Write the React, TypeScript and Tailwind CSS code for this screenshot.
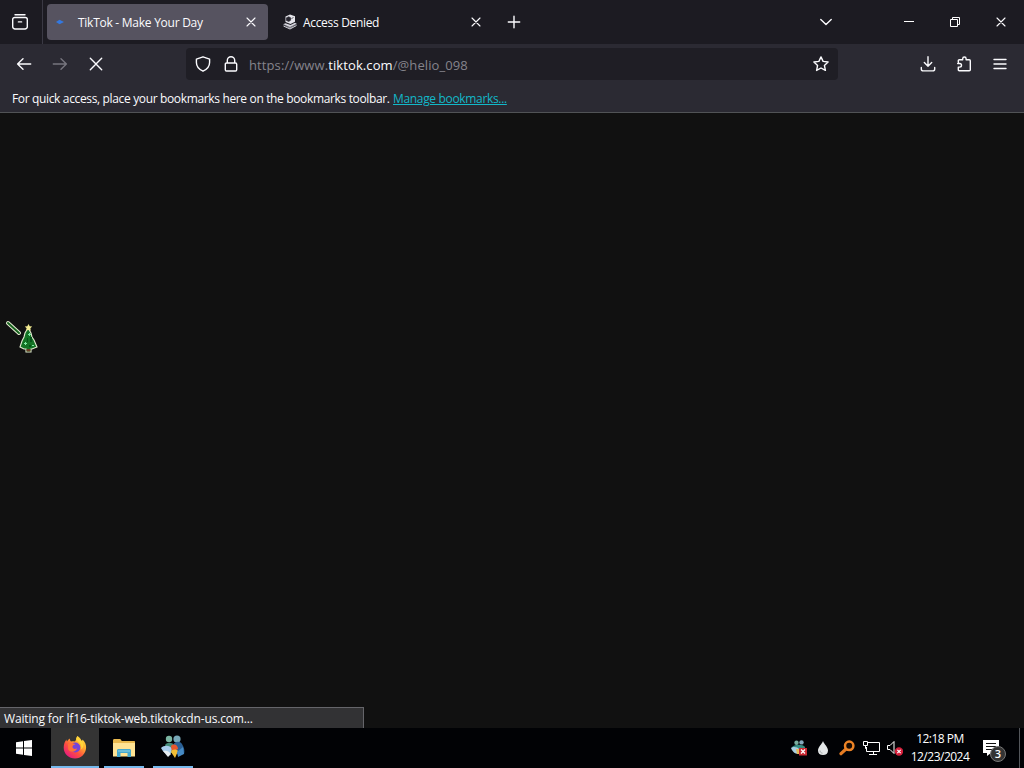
import type { ReactNode } from "react"

const stroke = {
  fill: "none",
  stroke: "currentColor",
  strokeWidth: 1.4,
  strokeLinecap: "round",
  strokeLinejoin: "round",
} as const

function Close({ className = "" }: { className?: string }) {
  return (
    <svg className={`h-2.5 w-2.5 shrink-0 ${className}`} viewBox="0 0 10 10">
      <path d="M1 1l8 8M9 1L1 9" {...stroke} strokeWidth={1.1} />
    </svg>
  )
}

function Icon({ children, className = "" }: { children: ReactNode; className?: string }) {
  return (
    <svg className={`h-4 w-4 shrink-0 ${className}`} viewBox="0 0 16 16" {...stroke}>
      {children}
    </svg>
  )
}

function TabBar() {
  return (
    <div className="flex h-11 items-center bg-[#1c1b22]">
      <div className="flex h-full w-[43px] shrink-0 items-center border-r border-[#3a3944] pl-3">
        <Icon>
          <path d="M3 .8h10" />
          <path d="M2.7 3.5h10.6a2 2 0 0 1 2 2v7.2a2.3 2.3 0 0 1-2.3 2.3H3a2.3 2.3 0 0 1-2.3-2.3V5.5a2 2 0 0 1 2-2zM6.4 7.9h3.2" />
        </Icon>
      </div>
      <div className="ml-1 flex h-9 w-[221px] shrink-0 items-center rounded bg-[#565360] pl-[9px]">
        <svg className="h-2 w-2" viewBox="0 0 8 8">
          <path d="M0 4l3.5-2.2L8 4 3.5 6.2z" fill="#3478df" />
        </svg>
        <span className="ml-3.5 w-[168px] whitespace-nowrap pt-0.5 text-xs tracking-[-0.26px]">
          TikTok - Make Your Day
        </span>
        <Close />
      </div>
      <div className="flex w-[220px] shrink-0 items-center pl-3.5">
        <svg className="h-4 w-4 shrink-0" viewBox="0 0 16 16">
          <path d="M3.5 2.5L8 .5l5 1.8v5.4L8.5 10 3.5 8z" fill="#e6e6ec" />
          <path d="M4.5 3.8l2.3-1 1.8 1v2.4L6.8 7.4 4.5 6.5zM9.5 4.5l2-1" fill="#282730" stroke="#282730" strokeWidth=".7" />
          <path d="M1 10.2l2.5-1 5 1.8 4.5-2.2 2 1.2-7 4.6z" fill="#d5d5dd" />
          <path d="M1 10.5l7 3 7-3.5" stroke="#4a4952" strokeWidth=".8" fill="none" />
          <path d="M1.5 12l6.5 3 6.5-3.5" stroke="#d5d5dd" fill="none" />
        </svg>
        <span className="ml-[5px] w-[168px] whitespace-nowrap pt-0.5 text-xs tracking-[-0.32px]">
          Access Denied
        </span>
        <Close />
      </div>
      <svg className="ml-[19px] h-3.5 w-3.5" viewBox="0 0 14 14">
        <path d="M7 1.3v11.4M1.3 7h11.4" {...stroke} />
      </svg>
      <div className="ml-auto flex items-center">
        <svg className="h-3 w-3" viewBox="0 0 12 12">
          <path d="M.8 3.5L6 8.5l5.2-5" {...stroke} />
        </svg>
        <svg className="ml-[72px] h-2.5 w-2.5" viewBox="0 0 10 10">
          <path d="M0 4.5h10" stroke="#fff" />
        </svg>
        <svg className="ml-9 h-2.5 w-2.5" viewBox="0 0 10 10">
          <path d="M.5 2.5h7v7h-7zM2.5 2.5v-2h7v7h-2" fill="none" stroke="#fff" />
        </svg>
        <Close className="ml-9 mr-[18px]" />
      </div>
    </div>
  )
}

function NavBar() {
  return (
    <div className="flex h-10 items-center bg-[#2b2a33]">
      <Icon className="ml-4">
        <path d="M14.7 8H1.6M7 2.8L1.6 8 7 13.2" />
      </Icon>
      <Icon className="ml-5 text-[#77767f]">
        <path d="M1.3 8h13.1M9 2.8L14.4 8 9 13.2" />
      </Icon>
      <Icon className="ml-5">
        <path d="M2.3 2.3l11.4 11.4M13.7 2.3L2.3 13.7" />
      </Icon>
      <div className="ml-[82px] flex h-8 w-[652px] shrink-0 items-center rounded-sm bg-[#1f1e25] pl-[9px]">
        <Icon>
          <path d="M8 .8l6.6 2.3v3.5c0 4.2-2.9 7-6.6 8.6-3.7-1.6-6.6-4.4-6.6-8.6V3.1z" />
        </Icon>
        <Icon className="ml-3">
          <path d="M3.5 7h9a1.2 1.2 0 0 1 1.2 1.2v5.6a1.2 1.2 0 0 1-1.2 1.2h-9a1.2 1.2 0 0 1-1.2-1.2V8.2A1.2 1.2 0 0 1 3.5 7zM4.3 7V4.4a3.7 3.7 0 0 1 7.4 0V7" />
        </Icon>
        <span className="ml-2.5 w-[564px] whitespace-nowrap pt-[3px] text-[13px] tracking-[0.1px] text-[#85848c]">
          https://www.<span className="text-[#fbfbfe]">tiktok.com</span>/@helio_098
        </span>
        <Icon>
          <path d="M8 .9l2.1 4.5 5 .6-3.7 3.4 1 5L8 12l-4.4 2.4 1-5L.9 6l5-.6z" />
        </Icon>
      </div>
      <div className="ml-auto mr-4 flex items-center gap-5">
        <Icon>
          <path d="M8 .8v9.4M4.3 6.6L8 10.3l3.7-3.7M1.3 11.5v1.4c0 1.2.8 2 2 2h9.4c1.2 0 2-.8 2-2v-1.4" />
        </Icon>
        <Icon>
          <path d="M2.3 6.6V4.8c0-.6.4-1 1-1h3.4V2.7a1.7 1.7 0 0 1 3.4 0v1.1h3.2c.6 0 1 .4 1 1v9c0 .6-.4 1-1 1h-10c-.6 0-1-.4-1-1v-2.7h1.4a1.8 1.8 0 0 0 0-3.6H1.7" />
        </Icon>
        <Icon>
          <path d="M2 3.5h12M2 8h12M2 12.5h12" />
        </Icon>
      </div>
    </div>
  )
}

function ButterflyIcon({ className }: { className: string }) {
  return (
    <svg className={className} viewBox="0 0 24 24">
      <circle cx="8" cy="4" r="3.2" fill="#7bb5a2" />
      <circle cx="16" cy="4" r="3.6" fill="#78a8b8" />
      <path d="M4 10c2-3 7-3 9 0v8H7z" fill="#438b78" />
      <path d="M12 10c2-4 7-4 9-1 2 3 3 7 2 10h-9z" fill="#2a5f94" />
      <path d="M0 13c3-3 9-3 11 1l-2 6c-4-1-7-3-9-7z" fill="#a7cceb" />
      <path d="M10 11c3-3 7-1 7 3l-6 3z" fill="#e9572c" />
      <path d="M2 16c3-1 6 0 8 3l-3 3z" fill="#e7eef3" />
      <path d="M10 17c1-3 5-3 7-1l-3 7z" fill="#f1be36" />
      <path d="M16 17l6-5 1 7-6 3z" fill="#468ac4" />
    </svg>
  )
}

function FirefoxIcon() {
  return (
    <svg className="h-6 w-6" viewBox="0 0 24 24">
      <defs>
        <linearGradient id="flame" x1="1" y1="0" x2="0.2" y2="1">
          <stop offset="0" stopColor="#fff44f" />
          <stop offset=".35" stopColor="#ffb02e" />
          <stop offset=".65" stopColor="#ff503f" />
          <stop offset="1" stopColor="#e31587" />
        </linearGradient>
      </defs>
      <path d="M14.5 1c2.5 1.8 3.5 3.5 4 5 .7-.3 1-1 1-1.6 2.4 2.3 3.8 5 3.6 8.4C22.8 19 18 23.5 12 23.5S.7 19 .7 12.7C.7 9 2 6 3.5 4.4c0 1 .1 1.7.5 2.2.8-1.3 1.7-2.2 2.7-3 .1 1.2.5 2.2 1.3 2.9 1.3-.4 2.8-.4 4 .1 1-1.9 2-3.2 2.5-5.6z" fill="url(#flame)" />
      <circle cx="12.3" cy="12.5" r="5" fill="#7544d8" />
      <path d="M5 9c2-1.5 5-1.5 7.5.5-2 .2-3 1-3 2.3 0 2 2.3 2.8 4.5 1.5-1 4-6.5 4.7-8.8 1.2z" fill="#ff7138" />
      <path d="M14.5 1c-2 2-2 4 .5 5.5 2.8 1.8 4 4.5 3 8 2.3-1.4 3-4.6 1.8-7C18.5 5 16 4 14.5 1z" fill="#ffd43a" />
    </svg>
  )
}

function Taskbar() {
  return (
    <div className="flex h-10 bg-[#010205] text-white">
      <div className="flex w-[51px] items-center pl-4">
        <svg className="h-4 w-4" viewBox="0 0 16 16">
          <path d="M0 2.3l7-1v6.2H0zM8 1.1L16 0v7.5H8zM0 8.5h7v6.2l-7-1zM8 8.5h8V16l-8-1.1z" fill="#fff" />
        </svg>
      </div>
      <div className="flex w-12 items-center justify-center border-b-2 border-[#76b9ed] bg-[#343434]">
        <FirefoxIcon />
      </div>
      <div className="ml-[5px] flex w-10 items-center justify-center border-b-2 border-[#76b9ed] pt-0.5">
        <svg className="h-[18px] w-[22px]" viewBox="0 0 22 18">
          <path d="M0 1.5C0 .7.5 0 1.3 0h6l1.5 2H21c.6 0 1 .4 1 1v14H0z" fill="#e9b94f" />
          <path d="M0 4h22v13.5H0z" fill="#ffe394" />
          <path d="M4 18v-6.5c0-.8.5-1.5 1.5-1.5h11c1 0 1.5.7 1.5 1.5V18h-3.5v-4h-7v4z" fill="#45a8ce" />
          <path d="M5 12h12" stroke="#8dd3e4" />
        </svg>
      </div>
      <div className="ml-[9px] flex w-10 items-center justify-center border-b-2 border-[#76b9ed]">
        <ButterflyIcon className="h-6 w-6" />
      </div>
      <div className="ml-auto flex items-center">
        <svg className="h-4 w-4" viewBox="0 0 16 16">
          <circle cx="5.5" cy="2.7" r="2.2" fill="#79ad9e" />
          <circle cx="10.5" cy="2.4" r="2.2" fill="#83a9bd" />
          <path d="M1 7c3-3 11-3 13 0v6H4z" fill="#348c82" />
          <path d="M0 8c2-2 7-1 8 1l-1 5c-3 0-6-3-7-6z" fill="#a8cee0" />
          <path d="M5 9h5v5H6z" fill="#e4bb5b" />
          <path d="M8 8h8v7.5H8z" fill="#c92932" />
          <path d="M10 9.5l4 4m0-4l-4 4" stroke="#fff" strokeWidth="1.3" />
        </svg>
        <svg className="ml-2 h-4 w-4" viewBox="0 0 16 16">
          <path d="M8 1c1 3 5 6 5 9.5C13 13.5 11 15 8 15s-5-1.5-5-4.5C3 7 7 4 8 1z" fill="#e4e7e8" />
          <path d="M5 10.5c.2 1.6 1 2.4 2.5 2.7" fill="none" stroke="#9ba1a5" />
        </svg>
        <svg className="ml-2 h-4 w-4" viewBox="0 0 16 16">
          <path d="M7 9l-5 4.7" stroke="#e67c23" strokeWidth="3.2" strokeLinecap="round" />
          <circle cx="10.2" cy="5.8" r="4.2" fill="#160b03" stroke="#ee8426" strokeWidth="2.5" />
        </svg>
        <svg className="ml-2 h-4 w-[17px]" viewBox="0 0 17 16">
          <path d="M5 2.5h11.5v9H3.5V7M6 14.5h8M10.5 11.5v3M.5 1.5h4v4h-4zM2.5 5.5v3h1" fill="none" stroke="#fff" />
        </svg>
        <svg className="ml-[7px] h-4 w-4" viewBox="0 0 16 16">
          <path d="M.5 5.5H3l4-4v12l-4-4H.5z" fill="none" stroke="#fff" />
          <circle cx="12" cy="11.5" r="4.2" fill="#d5203c" />
          <path d="M10.3 9.8l3.4 3.4m0-3.4l-3.4 3.4" stroke="#fff" strokeWidth="1.1" />
        </svg>
        <div className="ml-[5px] flex w-[64px] flex-col items-center whitespace-nowrap text-xs leading-[18px] tracking-[-0.5px]">
          <span>12:18 PM</span>
          <span>12/23/2024</span>
        </div>
        <svg className="ml-2.5 mt-1 h-6 w-[26px]" viewBox="0 0 26 24">
          <path d="M1 2h16v13H9l-4 3v-3H1z" fill="#fff" />
          <path d="M4 5.5h10M4 8.5h10M4 11.5h6" stroke="#111" />
          <circle cx="16" cy="16" r="7.5" fill="#343434" stroke="#777" />
          <text x="16" y="20" textAnchor="middle" fill="#fff" fontSize="11" fontFamily="Open Sans" fontWeight="600">3</text>
        </svg>
        <div className="ml-[11px] mr-1 h-10 w-px bg-[#53565b]" />
      </div>
    </div>
  )
}

function TreeCursor() {
  return (
    <svg className="absolute left-[5px] top-[207px] h-[34px] w-[34px]" viewBox="0 0 34 34">
      <path d="M3 3l11 10" stroke="#e8f1d6" strokeWidth="4" strokeLinecap="round" />
      <path d="M3 3l11 10" stroke="#17601e" strokeWidth="2" strokeLinecap="round" />
      <path d="M23 8l3 5 1 4 2 3 3 7-5 2h-1v3h-5v-3h-2l-4-2 2-6 2-4 1-4z" fill="#137325" stroke="#e2ecd1" strokeWidth="1.1" />
      <path d="M21.5 29h4v2.5h-4z" fill="#6c3c24" />
      <path d="M23.5 4l1.2 2.2 2.5.3-1.8 1.8.4 2.5-2.3-1-2.3 1 .4-2.5-1.8-1.8 2.5-.3z" fill="#f4ec91" />
      <path d="M24 13h1v3h-1zM23 14h3v1h-3zM20 22h1v3h-1zM19 23h3v1h-3zM27 25h2v1h-2z" fill="#81e9a3" />
      <path d="M25 17h2v5h-2zM22 18h1v4h-1zM24 25h2v2h-2z" fill="#055319" />
    </svg>
  )
}

export default function App() {
  return (
    <div className="flex h-screen flex-col overflow-hidden bg-[#111111] font-['Open_Sans','Noto_Sans',sans-serif] text-[#fbfbfe]">
      <TabBar />
      <NavBar />
      <div className="flex h-[29px] items-center whitespace-nowrap border-b border-[#515356] bg-[#2b2a33] pl-3 pt-0.5 text-xs">
        <span className="w-[381px] tracking-[-0.35px]">
          For quick access, place your bookmarks here on the bookmarks toolbar.
        </span>
        <a className="tracking-[-0.33px] text-[#12b8c9] underline">Manage bookmarks...</a>
      </div>

      <main className="relative flex-1">
        <TreeCursor />
        {/* Page load status */}
        <div className="absolute bottom-0 left-0 flex h-[21px] w-[364px] items-center whitespace-nowrap border-r border-t border-[#65656a] bg-[#323234] pl-1 pt-0.5 text-xs tracking-[-0.16px]">
          Waiting for lf16-tiktok-web.tiktokcdn-us.com...
        </div>
      </main>

      <Taskbar />
    </div>
  )
}
